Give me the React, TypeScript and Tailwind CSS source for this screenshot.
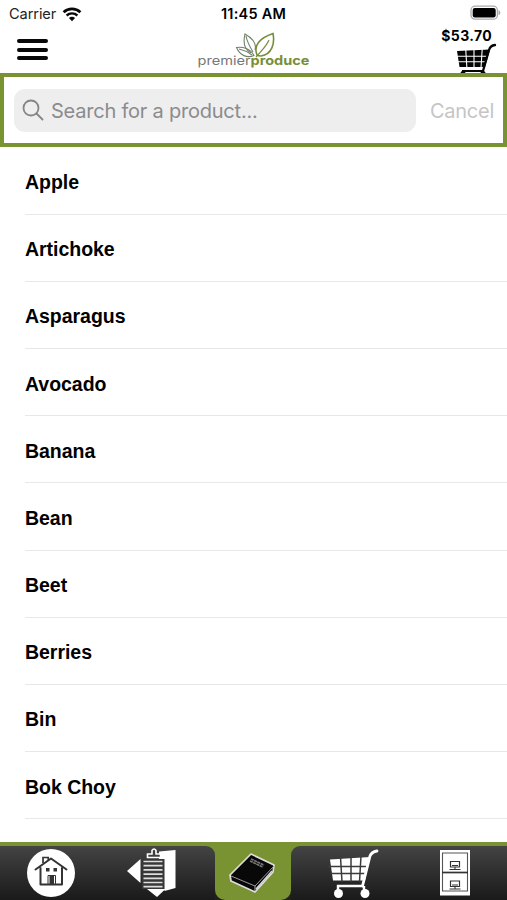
const products = ['Apple', 'Artichoke', 'Asparagus', 'Avocado', 'Banana', 'Bean', 'Beet', 'Berries', 'Bin', 'Bok Choy'];

function Wifi() {
  return (
    <svg width="20" height="15" viewBox="0 0 20 15" fill="none" stroke="#080808">
      <path d="M1.6 5.2C6.3.7 13.7.7 18.4 5.2" strokeWidth="2.7" />
      <path d="M4.6 8.5c3.1-2.9 7.7-2.9 10.8 0" strokeWidth="2.4" />
      <path d="M6.9 11c1.7-1.6 4.5-1.6 6.2 0L10 14.2z" fill="#080808" stroke="none" />
    </svg>
  );
}

function Battery() {
  return (
    <svg width="31" height="16" viewBox="0 0 31 16">
      <rect x="1" y="1.2" width="26.4" height="13" rx="4" fill="#fff" stroke="#aaa" strokeWidth="1.3" />
      <rect x="2.7" y="2.9" width="23" height="9.6" rx="2.2" fill="#000" />
      <path d="M28.5 5.3c2.4.6 2.4 4.2 0 4.8z" fill="#aaa" />
    </svg>
  );
}

function Logo() {
  return (
    <svg width="116" height="38" viewBox="0 0 116 38" fill="none">
      <g stroke="#71806a" strokeWidth="1.1">
        <path d="M55 21c-7-4-8-11-6-19 7 4 12 9 10 16" />
        <path d="M50 4c1 6 4 11 7 16" />
        <path d="M40.500 15.500c6-1 14 1 17.500 8-7 3-14 0-17.500-8z" />
        <path d="M43 17c5 1 9 3 13 6" />
      </g>
      <path d="M61 23C57 13 64 6 77 1.500c2 10-1 21-12 22.500-3 0-3 0-4-1z" stroke="#768d3b" strokeWidth="1.6" />
      <path d="M60 25c5-6 10-10 13-17" stroke="#768d3b" strokeWidth="1.2" />
      <text x="1.5" y="33.4" fontFamily="Inter, sans-serif" fontSize="12.5" textLength="53" lengthAdjust="spacingAndGlyphs" fill="#777">premier</text>
      <text x="54.5" y="33.4" fontFamily="Inter, sans-serif" fontSize="12.5" fontWeight="700" textLength="59" lengthAdjust="spacingAndGlyphs" fill="#778f38">produce</text>
    </svg>
  );
}

function Cart() {
  return (
    <svg width="52" height="52" viewBox="0 0 52 52" fill="none" stroke="#fff">
      <path d="M2 11.500 42 9l-5 23.500H5z" fill="#fff" stroke="none" />
      <path d="M12.500 9 14 34M23 8v26M33 8l-1.500 26M0 18.500h38M2 25.500h35" stroke="#3b3b3b" strokeWidth="1.500" />
      <path d="M34.500 38 42 8q1.500-4 7-5" strokeWidth="2.800" strokeLinecap="round" />
      <path d="M36 38H10v5m26-5v5" strokeWidth="2.400" />
      <circle cx="10.500" cy="45.500" r="4.500" fill="#fff" stroke="none" />
      <circle cx="37" cy="45.500" r="4.500" fill="#fff" stroke="none" />
    </svg>
  );
}

function HeaderCart() {
  return (
    <svg width="42" height="31" viewBox="0 0 42 31" fill="none" stroke="#050505">
      <path d="M2 8l33-1.500L30 24H4.500z" fill="#050505" stroke="none" />
      <path d="m10.700 6 1.200 19M19 6v19m8.200-19L26 25M0 13.300h31.500M2 18.700h28.500" stroke="#fff" strokeWidth="1.100" />
      <path d="m28 28 6-21q1.300-4.500 6-5" strokeWidth="2.300" strokeLinecap="round" />
      <path d="M7 28h21.500" strokeWidth="2" />
      <circle cx="8" cy="30.500" r="2.600" fill="#050505" stroke="none" />
      <circle cx="28" cy="30.500" r="2.600" fill="#050505" stroke="none" />
    </svg>
  );
}

function House() {
  return (
    <svg width="50" height="50" viewBox="0 0 50 50" fill="none" stroke="#333">
      <circle cx="25" cy="25" r="24" fill="#fff" stroke="none" />
      <path d="M9.500 21.500 25 10.500l15.500 11M14.500 20v16.500h21.500V20" strokeWidth="2" strokeLinecap="round" strokeLinejoin="round" />
      <path d="M17 15v-5.500h5.200v2.300" strokeWidth="1.700" />
      <path d="M20 20h3.500v3.500H20zm7.500 0H31v3.500h-3.500zM23.500 28h4.500v8h-4.500z" fill="#333" stroke="none" />
      <path d="M22 36v-8.500h7.500V36" strokeWidth="1" />
    </svg>
  );
}

function Clipboard() {
  return (
    <svg width="52" height="51" viewBox="0 0 52 51">
      <path d="M33 4.500 49.500 3v38l-11 3V12H33zM1 24l13.500-12v24zM21 42h18.500L31 50z" fill="#fff" />
      <path d="M16 12h22v30H16z" fill="#373737" />
      <path d="M17.500 14.500h19M17.500 18.700h19M17.500 22.900h19M17.500 27.100h19M17.500 31.300h19M17.500 35.500h19M17.500 39.700h19" stroke="#ddd" strokeWidth="1.700" />
      <path d="M21.500 10.500V7H26V3.500q2-3 4 0V7h4.500v3.500z" fill="#3e3e3e" stroke="#fff" strokeWidth="1.600" />
    </svg>
  );
}

function Book() {
  return (
    <svg width="50" height="44" viewBox="0 0 50 44" strokeLinejoin="round">
      <path d="M2 24 23 3l23 11-1 7-18 20L3 30z" fill="#080808" stroke="#ddd" strokeWidth="1.700" />
      <path d="m3 25 24 10 19-20" fill="none" stroke="#999" strokeWidth="1" />
      <path d="m28 38 16-18" stroke="#ddd" strokeWidth="1.400" />
      <path d="m22 10 13 6m-12-8 13 6" stroke="#777" strokeWidth="1.600" strokeDasharray="3 .5" />
      <path d="M27 35v5" stroke="#aaa" />
    </svg>
  );
}

function Cabinet() {
  return (
    <svg width="32" height="46" viewBox="0 0 32 46" fill="none" stroke="#333">
      <path d="M1 0h30v45.500H1z" fill="#fff" stroke="none" />
      <path d="M3.500 3h25v38h-25z" stroke="#555" strokeWidth="1.100" />
      <path d="M3 22.500h26" strokeWidth="1.700" />
      <path d="M11.500 11.500h9V17h-9zm0 19.500h9v5.500h-9z" strokeWidth="1.200" />
      <path d="M13 15.500h6M13 35h6M16 17v2.500m0 17V39M10.500 19.500h11M10.500 39h11" strokeWidth="1.100" />
    </svg>
  );
}

export default function App() {
  return (
    <main className="flex h-[900px] w-[507px] flex-col overflow-hidden bg-white font-['Inter','Liberation_Sans',sans-serif] text-black">
      <header className="grid h-[73px] shrink-0 grid-cols-3">
        <div>
          <div className="flex h-7 items-center gap-[6px] pl-[9px] text-[14.6px] tracking-[-.1px] text-[#222]">
            <span className="pt-px">Carrier</span> <Wifi />
          </div>
          <div className="ml-[17px] mt-[11px] flex w-[31px] flex-col gap-[4.5px]">
            <i className="h-1 rounded-sm bg-[#080808]" />
            <i className="h-1 rounded-sm bg-[#080808]" />
            <i className="h-1 rounded-sm bg-[#080808]" />
          </div>
        </div>
        <div className="flex flex-col items-center">
          <div className="h-8 text-[14.5px] leading-[28px] font-semibold tracking-[.25px]">11:45 AM</div>
          <Logo />
        </div>
        <div className="flex flex-col items-end">
          <div className="mr-[6px] mt-[5px] h-[21px]"><Battery /></div>
          <div className="mr-[15px] h-[17px] text-[14px] leading-[19px] font-bold tracking-[.35px]">$53.70</div>
          <div className="mr-[10px] h-[30px] overflow-hidden"><HeaderCart /></div>
        </div>
      </header>

      <section className="flex h-[74px] shrink-0 items-center border-4 border-[#799332] pr-[9px] pl-[10px]">
        <div className="flex h-[43px] w-[402px] items-center rounded-[11px] bg-[#eee] pl-[8px] text-[20px] text-[#8b8b8e]">
          <svg width="22" height="22" viewBox="0 0 22 22" fill="none" stroke="#858589" strokeWidth="1.8" strokeLinecap="round">
            <circle cx="9" cy="9" r="7.5" /><path d="m14.5 14.5 6 6" />
          </svg>
          <span className="ml-[7px] pt-[2px] tracking-[-.22px]">Search for a product...</span>
        </div>
        <button className="ml-auto pt-[2px] text-[20px] tracking-[-.25px] text-[#c5c5c5]">Cancel</button>
      </section>

      <ul className="h-[695px] shrink-0 overflow-hidden pt-[.5px] pl-[25px] font-['Liberation_Sans',sans-serif]">
        {products.map((name) => (
          <li key={name} className="flex h-[67.2px] items-center border-b border-[#e8e8e8] pt-[4px] text-[19.5px] font-bold tracking-[-.03px]">{name}</li>
        ))}
      </ul>

      <nav className="flex h-[58px] shrink-0 border-t-4 border-[#799332] bg-[#799332] text-white">
        <div className="flex w-[215px] rounded-tr-[9px] bg-linear-to-b from-[#444] to-[#1a1a1a]">
          <button className="ml-[26px] mt-[2px] h-[50px]"><House /></button>
          <button className="ml-[50px] mt-px h-[50px]"><Clipboard /></button>
        </div>
        <div className="w-[76px] bg-[#202020]">
          <button className="flex h-full w-full justify-center rounded-b-[10px] bg-[#799332] pt-[5px]"><Book /></button>
        </div>
        <div className="flex flex-1 rounded-tl-[9px] bg-linear-to-b from-[#444] to-[#1a1a1a]">
          <button className="ml-[37px] mt-[2px] h-[52px]"><Cart /></button>
          <button className="ml-[59px] mt-[4px] h-[46px]"><Cabinet /></button>
        </div>
      </nav>
    </main>
  );
}
